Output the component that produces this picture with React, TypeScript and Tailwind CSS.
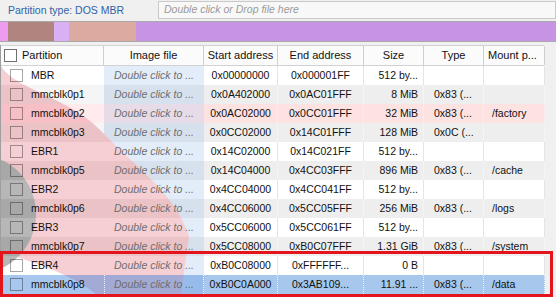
import React from "react";

type Kind = "w" | "g" | "pink" | "sel";

type Row = {
  name: string;
  start: string;
  end: string;
  size: string;
  type: string;
  mount: string;
  kind: Kind;
};

const rows: Row[] = [
  { name: "MBR", start: "0x00000000", end: "0x000001FF", size: "512 by...", type: "", mount: "", kind: "w" },
  { name: "mmcblk0p1", start: "0x0A402000", end: "0x0AC01FFF", size: "8 MiB", type: "0x83 (...", mount: "", kind: "g" },
  { name: "mmcblk0p2", start: "0x0AC02000", end: "0x0CC01FFF", size: "32 MiB", type: "0x83 (...", mount: "/factory", kind: "pink" },
  { name: "mmcblk0p3", start: "0x0CC02000", end: "0x14C01FFF", size: "128 MiB", type: "0x0C (...", mount: "", kind: "g" },
  { name: "EBR1", start: "0x14C02000", end: "0x14C021FF", size: "512 by...", type: "", mount: "", kind: "w" },
  { name: "mmcblk0p5", start: "0x14C04000", end: "0x4CC03FFF", size: "896 MiB", type: "0x83 (...", mount: "/cache", kind: "g" },
  { name: "EBR2", start: "0x4CC04000", end: "0x4CC041FF", size: "512 by...", type: "", mount: "", kind: "w" },
  { name: "mmcblk0p6", start: "0x4CC06000", end: "0x5CC05FFF", size: "256 MiB", type: "0x83 (...", mount: "/logs", kind: "g" },
  { name: "EBR3", start: "0x5CC06000", end: "0x5CC061FF", size: "512 by...", type: "", mount: "", kind: "w" },
  { name: "mmcblk0p7", start: "0x5CC08000", end: "0xB0C07FFF", size: "1.31 GiB", type: "0x83 (...", mount: "/system", kind: "g" },
  { name: "EBR4", start: "0xB0C08000", end: "0xFFFFFF...", size: "0 B", type: "", mount: "", kind: "w" },
  { name: "mmcblk0p8", start: "0xB0C0A000", end: "0x3AB109...", size: "11.91 ...", type: "0x83 (...", mount: "/data", kind: "sel" },
];

const grid = "grid grid-cols-[103px_100px_74px_86px_60px_60px_61px]";

// overlay on the two left cells, which let the watermark show through
const leftBg: Record<Kind, string> = {
  w: "bg-white/10",
  g: "bg-black/[0.04]",
  pink: "bg-[#ff9aa6]/20",
  sel: "bg-[#3f82dc]/45",
};

// solid background for the remaining cells
const rightBg: Record<Kind, string> = {
  w: "bg-white border-r border-[#e4e4e4]",
  g: "bg-[#eeeeee] border-r border-[#f4f4f4]",
  pink: "bg-[#fde2e2] border-r border-[#fbeaea]",
  sel: "bg-[#a7c8ec] border-r border-dotted border-white/80",
};

function Watermark() {
  return (
    <svg
      className="absolute left-0 top-0"
      width="203"
      height="228"
      viewBox="0 0 203 228"
    >
      <rect x="0" y="0" width="203" height="228" fill="#ffffff" />
      <rect x="103" y="0" width="100" height="228" fill="#e0ebf8" />
      <path
        d="M0,0 C15,25 70,30 105,70 C140,105 175,130 188,170 L180,228 L95,228 C70,208 30,195 0,186 Z"
        fill="#f5cacf"
      />
      <circle cx="-25" cy="148" r="60" fill="#afafaf" />
    </svg>
  );
}

function Check({ header }: { header?: boolean }) {
  return header ? (
    <span className="h-[13px] w-[13px] shrink-0 border border-[#6f6f6f] bg-white" />
  ) : (
    <span className="h-[13px] w-[13px] shrink-0 border border-black/35" />
  );
}

export default function App() {
  return (
    <div
      className="h-[297px] w-[556px] overflow-hidden bg-[#f0f0f0] text-[10.5px] text-[#111]"
      style={{ fontFamily: '"Liberation Sans", Arial, sans-serif' }}
    >
      {/* partition type + file box */}
      <div className="flex h-[21px] items-start">
        <div className="w-[158px] pl-[8px] pt-[3px] text-[10.5px] text-[#2f62a8]">
          Partition type: DOS MBR
        </div>
        <div className="mt-[1px] flex h-[18px] flex-1 items-center border border-[#c9c9c9] bg-[#f8f8f8] pl-[5px] italic text-[#9a9a9a]">
          Double click or Drop file here
        </div>
      </div>

      {/* partition map bar */}
      <div className="flex h-[21px] border-y border-[#a9a9a9]">
        <div className="w-[8px] bg-[#ee9cf0]" />
        <div className="w-[46px] bg-[#b0857f]" />
        <div className="w-[15px] bg-[#dab0f5]" />
        <div className="w-[67px] bg-[#dcaaa0]" />
        <div className="flex-1 bg-[#c794e3]" />
      </div>

      {/* table */}
      <div className="relative mt-[3px] w-[544px] border-l border-[#9f9f9f]">
        <div className={`${grid} h-[21px] border-y border-[#d2d2d2] bg-[#fbfbfb] text-[11px]`}>
          <div className="flex items-center gap-[5px] border-r border-[#cfcfcf] pl-[3px]">
            <Check header />
            <span>Partition</span>
          </div>
          <div className="flex items-center justify-center border-r border-[#cfcfcf]">Image file</div>
          <div className="flex items-center justify-center border-r border-[#cfcfcf]">Start address</div>
          <div className="flex items-center justify-center border-r border-[#cfcfcf]">End address</div>
          <div className="flex items-center justify-center border-r border-[#cfcfcf]">Size</div>
          <div className="flex items-center justify-center border-r border-[#cfcfcf]">Type</div>
          <div className="flex items-center pl-[4px] border-r border-[#cfcfcf]">Mount p...</div>
        </div>

        <div className="relative">
          <Watermark />
          <div className="relative">
            {rows.map((r) => (
              <div key={r.name} className={`${grid} h-[19px] whitespace-nowrap`}>
                <div className={`flex items-center gap-[8px] pl-[9px] ${leftBg[r.kind]}`}>
                  <Check />
                  <span>{r.name}</span>
                </div>
                <div
                  className={`flex items-center justify-center italic text-[#6e6e6e] ${leftBg[r.kind]} ${
                    r.kind === "sel" ? "border-x border-dotted border-white/80" : ""
                  }`}
                >
                  Double click to ...
                </div>
                <div className={`flex items-center justify-center ${rightBg[r.kind]}`}>{r.start}</div>
                <div className={`flex items-center justify-center ${rightBg[r.kind]}`}>{r.end}</div>
                <div className={`flex items-center justify-end pr-[5px] ${rightBg[r.kind]}`}>{r.size}</div>
                <div className={`flex items-center pl-[10px] ${rightBg[r.kind]}`}>{r.type}</div>
                <div className={`flex items-center pl-[8px] ${rightBg[r.kind]}`}>{r.mount}</div>
              </div>
            ))}
          </div>
        </div>
      </div>

      {/* red highlight box drawn over the last two rows */}
      <div className="pointer-events-none absolute left-0 top-[251px] h-[46px] w-[553px] border-[3px] border-[#e3141b]" />
    </div>
  );
}
